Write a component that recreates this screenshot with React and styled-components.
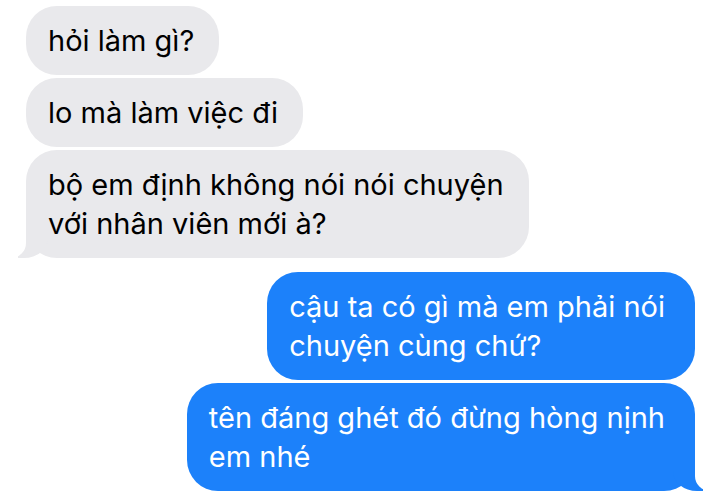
import styled, { createGlobalStyle } from "styled-components";

const GlobalStyle = createGlobalStyle`
  html, body {
    margin: 0;
    padding: 0;
    background: #ffffff;
  }
  body {
    font-family: "Inter", "Liberation Sans", sans-serif;
    -webkit-font-smoothing: antialiased;
  }
`;

const Thread = styled.div`
  width: 720px;
  height: 500px;
  box-sizing: border-box;
  padding-top: 6px;
  display: flex;
  flex-direction: column;
  overflow: hidden;
`;

const Group = styled.div`
  display: flex;
  flex-direction: column;
  align-items: ${(p) => (p.$mine ? "flex-end" : "flex-start")};
  gap: 3px;
  padding: ${(p) => (p.$mine ? "0 25px 0 0" : "0 0 0 26px")};
  margin-bottom: 14px;
`;

const Bubble = styled.div`
  position: relative;
  box-sizing: border-box;
  padding: ${(p) => (p.$mine ? "15px 30px 15px 22px" : "15px 25px 15px 22px")};
  border-radius: 31px;
  font-size: 29px;
  line-height: 39px;
  white-space: nowrap;
  background: ${(p) => (p.$mine ? "#1c81fa" : "#e9e9ec")};
  color: ${(p) => (p.$mine ? "#ffffff" : "#000000")};

  ${(p) =>
    p.$tail &&
    !p.$mine &&
    `
    &::before {
      content: "";
      position: absolute;
      bottom: 0;
      left: -8px;
      width: 30px;
      height: 32px;
      background: #e9e9ec;
      border-bottom-right-radius: 24px 20px;
    }
    &::after {
      content: "";
      position: absolute;
      bottom: 0;
      left: -38px;
      width: 38px;
      height: 32px;
      background: #ffffff;
      border-bottom-right-radius: 15px;
    }
  `}

  ${(p) =>
    p.$tail &&
    p.$mine &&
    `
    &::before {
      content: "";
      position: absolute;
      bottom: 0;
      right: -8px;
      width: 30px;
      height: 32px;
      background: #1c81fa;
      border-bottom-left-radius: 24px 20px;
    }
    &::after {
      content: "";
      position: absolute;
      bottom: 0;
      right: -38px;
      width: 38px;
      height: 32px;
      background: #ffffff;
      border-bottom-left-radius: 15px;
    }
  `}
`;

const Line = styled.span`
  display: block;
  position: relative;
  z-index: 1;
`;

const theirs = [
  ["hỏi làm gì?"],
  ["lo mà làm việc đi"],
  ["bộ em định không nói nói chuyện", "với nhân viên mới à?"],
];

const mine = [
  ["cậu ta có gì mà em phải nói", "chuyện cùng chứ?"],
  ["tên đáng ghét đó đừng hòng nịnh", "em nhé"],
];

const App = () => {
  return (
    <>
      <GlobalStyle />
      <Thread>
        <Group>
          {theirs.map((lines, i) => (
            <Bubble key={i} $tail={i === theirs.length - 1}>
              {lines.map((l, j) => (
                <Line key={j}>{l}</Line>
              ))}
            </Bubble>
          ))}
        </Group>
        <Group $mine>
          {mine.map((lines, i) => (
            <Bubble key={i} $mine $tail={i === mine.length - 1}>
              {lines.map((l, j) => (
                <Line key={j}>{l}</Line>
              ))}
            </Bubble>
          ))}
        </Group>
      </Thread>
    </>
  );
};

export default App;
